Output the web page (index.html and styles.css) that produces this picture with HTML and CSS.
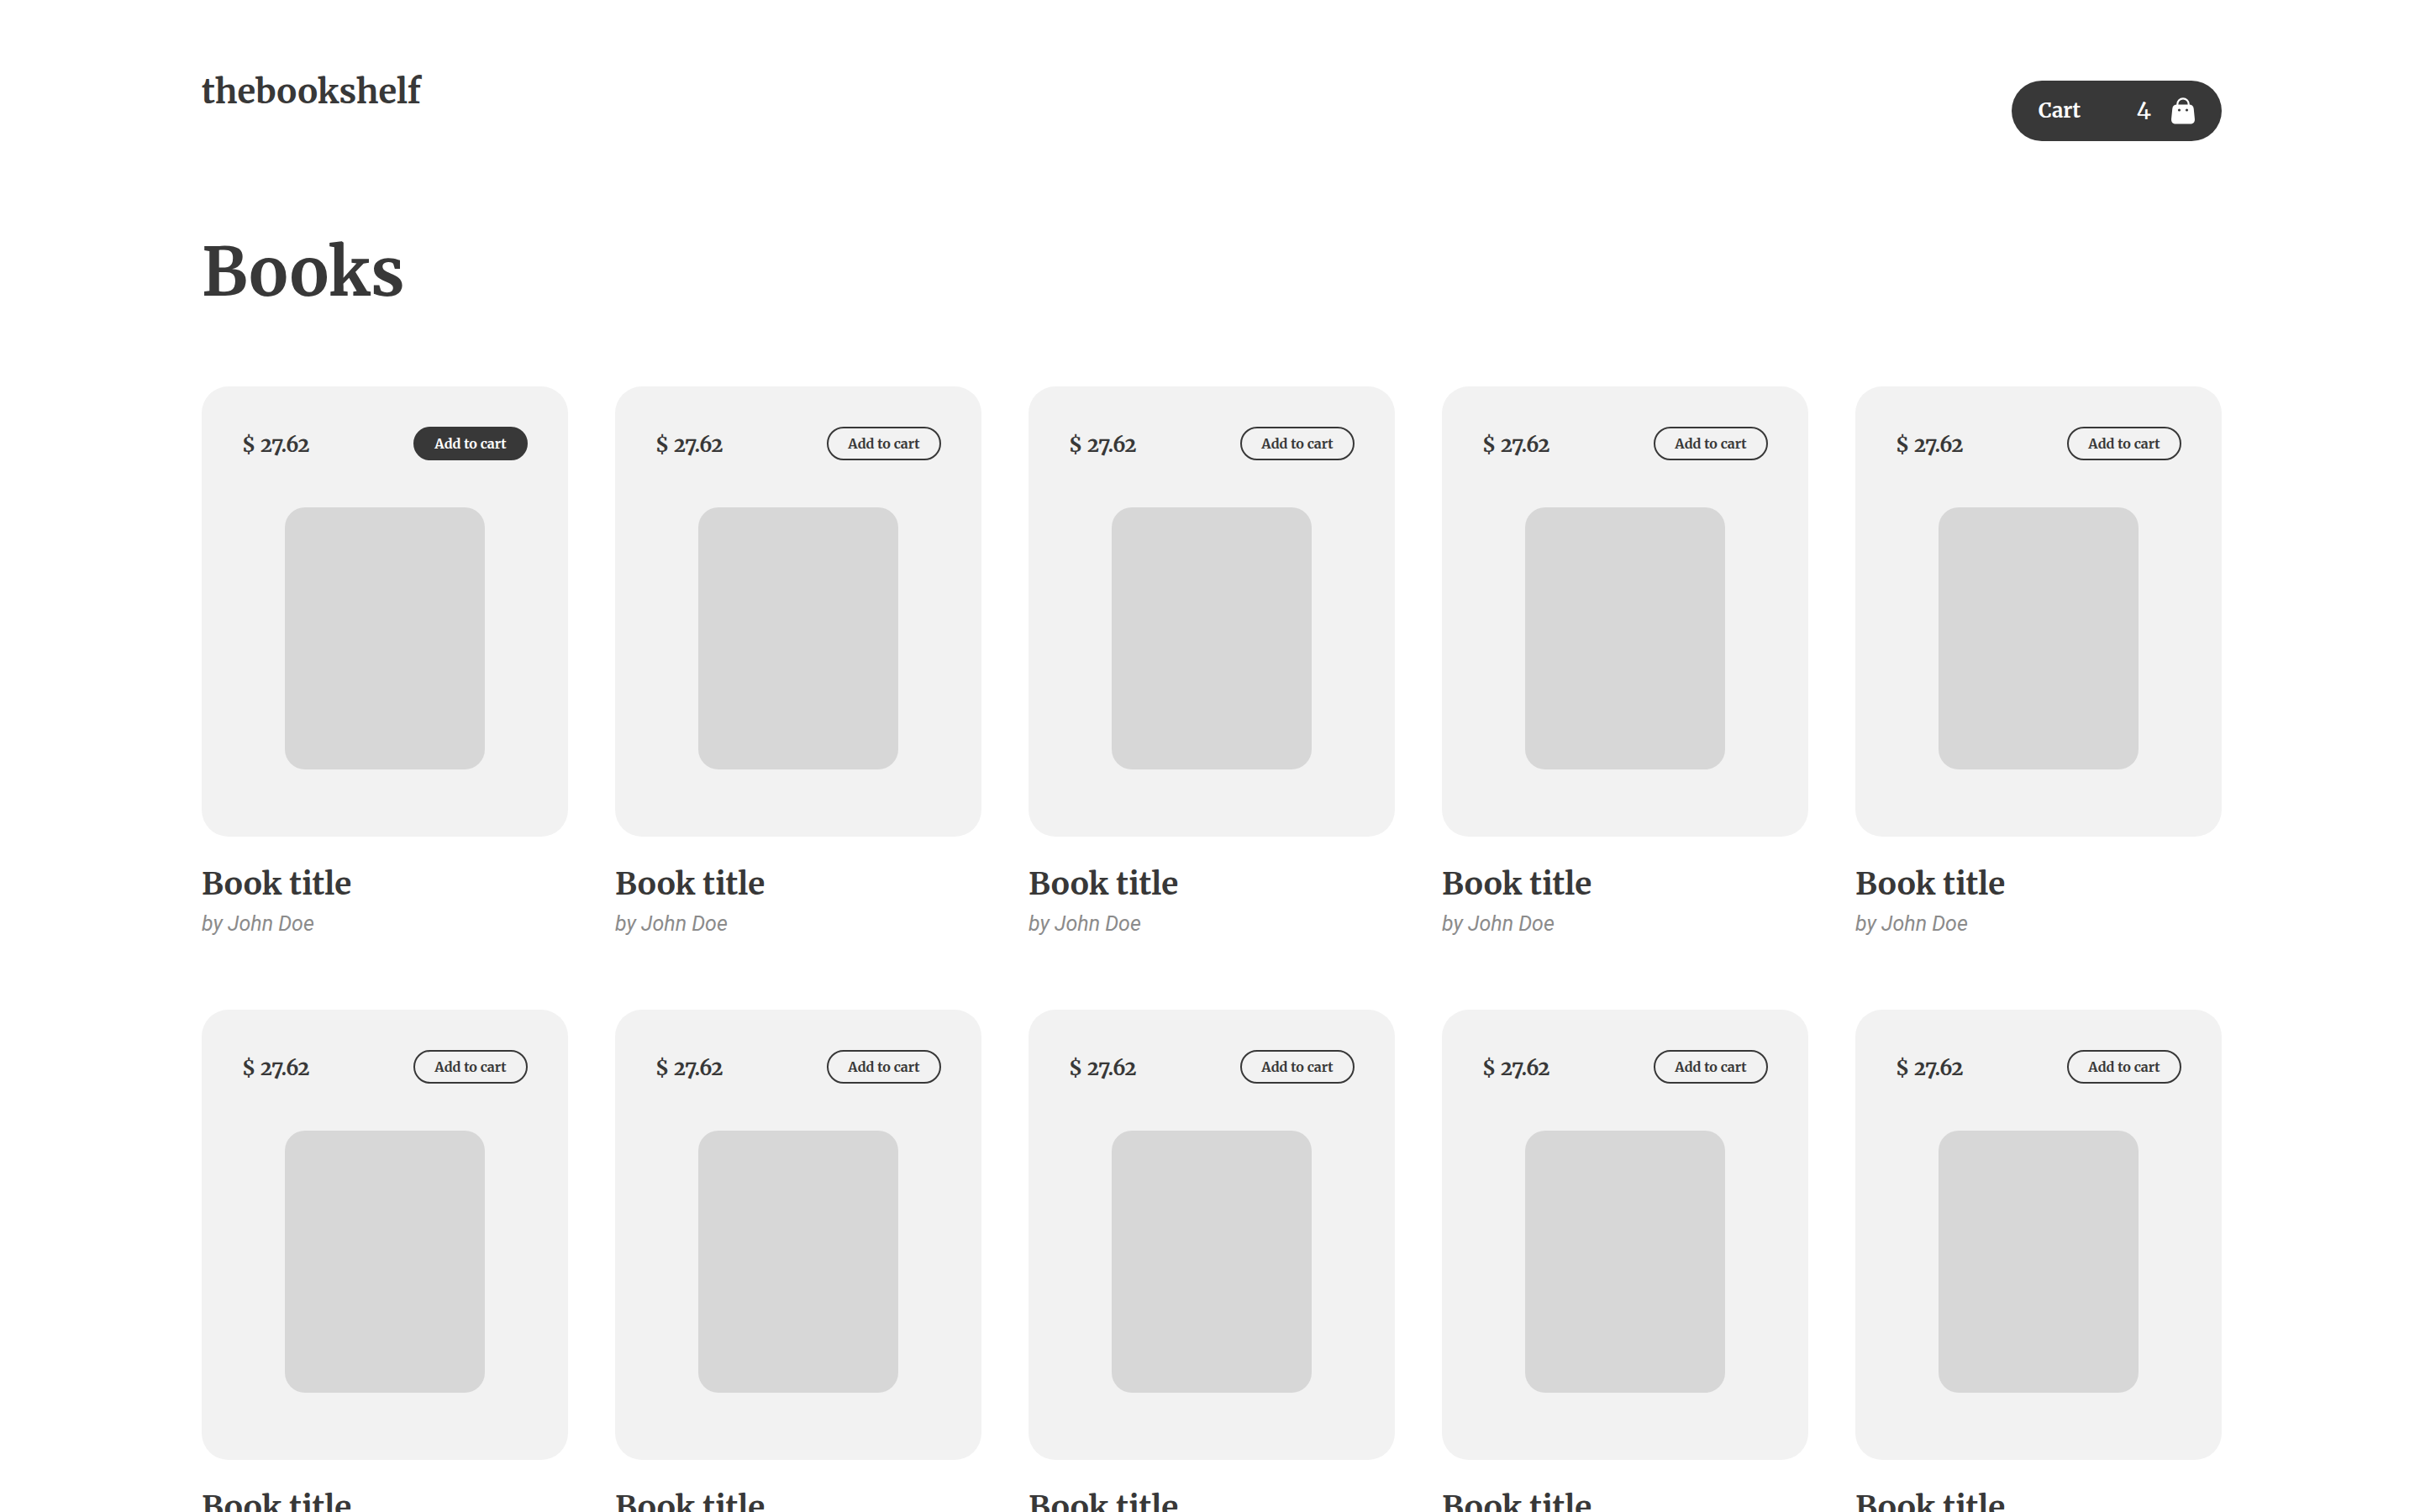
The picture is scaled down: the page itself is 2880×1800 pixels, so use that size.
FILE: index.html
```html
<!DOCTYPE html>
<html lang="en">
<head>
<meta charset="utf-8">
<meta name="viewport" content="width=device-width, initial-scale=1">
<title>thebookshelf</title>
<link rel="stylesheet" href="styles.css">
</head>
<body>
<header class="header">
  <a class="brand" href="#">thebookshelf</a>
  <button class="cart" type="button">
    <span class="cart-label">Cart</span>
    <span class="cart-count">4</span>
    <svg class="cart-icon" viewBox="0 0 28 32" aria-hidden="true">
      <path d="M7.300 10V8a6.700 6.700 0 0 1 13.400 0v2" fill="none" stroke="#fff" stroke-width="2.200"/>
      <path d="M7 8.500h14c3.600 0 5.400 1.600 5.700 4.800l1.200 12c.4 4-1.600 6.200-5.400 6.200H5.500c-3.800 0-5.800-2.200-5.400-6.200l1.200-12C1.600 10.100 3.400 8.500 7 8.500z" fill="#fff"/>
      <circle cx="9.500" cy="15" r="1.600" fill="#383838"/>
      <circle cx="18.500" cy="15" r="1.600" fill="#383838"/>
    </svg>
  </button>
</header>
<main class="main">
  <h1 class="heading">Books</h1>
  <ul class="books">
    <li class="book">
      <div class="card">
        <div class="card-top"><span class="price">$ 27.62</span><button class="add add-active" type="button">Add to cart</button></div>
        <div class="cover"></div>
      </div>
      <h2 class="title">Book title</h2>
      <p class="author">by John Doe</p>
    </li>
    <li class="book">
      <div class="card">
        <div class="card-top"><span class="price">$ 27.62</span><button class="add" type="button">Add to cart</button></div>
        <div class="cover"></div>
      </div>
      <h2 class="title">Book title</h2>
      <p class="author">by John Doe</p>
    </li>
    <li class="book">
      <div class="card">
        <div class="card-top"><span class="price">$ 27.62</span><button class="add" type="button">Add to cart</button></div>
        <div class="cover"></div>
      </div>
      <h2 class="title">Book title</h2>
      <p class="author">by John Doe</p>
    </li>
    <li class="book">
      <div class="card">
        <div class="card-top"><span class="price">$ 27.62</span><button class="add" type="button">Add to cart</button></div>
        <div class="cover"></div>
      </div>
      <h2 class="title">Book title</h2>
      <p class="author">by John Doe</p>
    </li>
    <li class="book">
      <div class="card">
        <div class="card-top"><span class="price">$ 27.62</span><button class="add" type="button">Add to cart</button></div>
        <div class="cover"></div>
      </div>
      <h2 class="title">Book title</h2>
      <p class="author">by John Doe</p>
    </li>
    <li class="book">
      <div class="card">
        <div class="card-top"><span class="price">$ 27.62</span><button class="add" type="button">Add to cart</button></div>
        <div class="cover"></div>
      </div>
      <h2 class="title">Book title</h2>
      <p class="author">by John Doe</p>
    </li>
    <li class="book">
      <div class="card">
        <div class="card-top"><span class="price">$ 27.62</span><button class="add" type="button">Add to cart</button></div>
        <div class="cover"></div>
      </div>
      <h2 class="title">Book title</h2>
      <p class="author">by John Doe</p>
    </li>
    <li class="book">
      <div class="card">
        <div class="card-top"><span class="price">$ 27.62</span><button class="add" type="button">Add to cart</button></div>
        <div class="cover"></div>
      </div>
      <h2 class="title">Book title</h2>
      <p class="author">by John Doe</p>
    </li>
    <li class="book">
      <div class="card">
        <div class="card-top"><span class="price">$ 27.62</span><button class="add" type="button">Add to cart</button></div>
        <div class="cover"></div>
      </div>
      <h2 class="title">Book title</h2>
      <p class="author">by John Doe</p>
    </li>
    <li class="book">
      <div class="card">
        <div class="card-top"><span class="price">$ 27.62</span><button class="add" type="button">Add to cart</button></div>
        <div class="cover"></div>
      </div>
      <h2 class="title">Book title</h2>
      <p class="author">by John Doe</p>
    </li>
  </ul>
</main>
</body>
</html>
```
FILE: styles.css
```css
* {
  box-sizing: border-box;
}

body {
  margin: 0;
  padding: 84px 236px 64px 240px;
  background: #fff;
  color: #383838;
  font-family: "Merriweather", "Noto Serif", "DejaVu Serif Condensed", serif;
}

.header {
  display: flex;
  justify-content: space-between;
  align-items: flex-start;
}

.brand {
  color: inherit;
  font-size: 40px;
  font-weight: 700;
  line-height: 50px;
  text-decoration: none;
}

.cart {
  display: flex;
  align-items: center;
  width: 250px;
  height: 72px;
  margin-top: 12px;
  padding: 0 32px;
  border: 0;
  border-radius: 36px;
  background: #383838;
  color: #fff;
  font-family: inherit;
  font-size: 24px;
  font-weight: 700;
  line-height: 32px;
}

.cart-count {
  margin-left: auto;
  font-size: 28px;
  font-weight: 400;
}

.cart-icon {
  width: 28px;
  height: 32px;
  margin-left: 24px;
}

.heading {
  margin: 102px 0 82px;
  font-size: 78px;
  font-weight: 700;
  line-height: 108px;
}

.books {
  display: grid;
  grid-template-columns: repeat(5, 1fr);
  gap: 86px 56px;
  margin: 0;
  padding: 0;
  list-style: none;
}

.card {
  padding: 48px 48px 80px;
  border-radius: 32px;
  background: #f2f2f2;
}

.card-top {
  display: flex;
  justify-content: space-between;
  align-items: center;
}

.price {
  padding-top: 4px;
  font-size: 24px;
  font-weight: 700;
  font-variant-numeric: oldstyle-nums;
  line-height: 36px;
}

.add {
  min-width: 136px;
  height: 40px;
  padding: 0 20px;
  border: 2px solid #383838;
  border-radius: 20px;
  background: transparent;
  color: #383838;
  font-family: inherit;
  font-size: 16px;
  font-weight: 700;
  line-height: 24px;
}

.add-active {
  background: #383838;
  color: #fff;
}

.cover {
  width: 70%;
  height: 312px;
  margin: 56px auto 0;
  border-radius: 24px;
  background: #d7d7d7;
}

.title {
  margin: 32px 0 0;
  font-size: 37px;
  font-weight: 700;
  line-height: 48px;
}

.author {
  margin: 8px 0 0;
  color: #8b8b8b;
  font-family: Roboto, sans-serif;
  font-size: 25px;
  font-style: italic;
  font-weight: 400;
  line-height: 32px;
}
```
